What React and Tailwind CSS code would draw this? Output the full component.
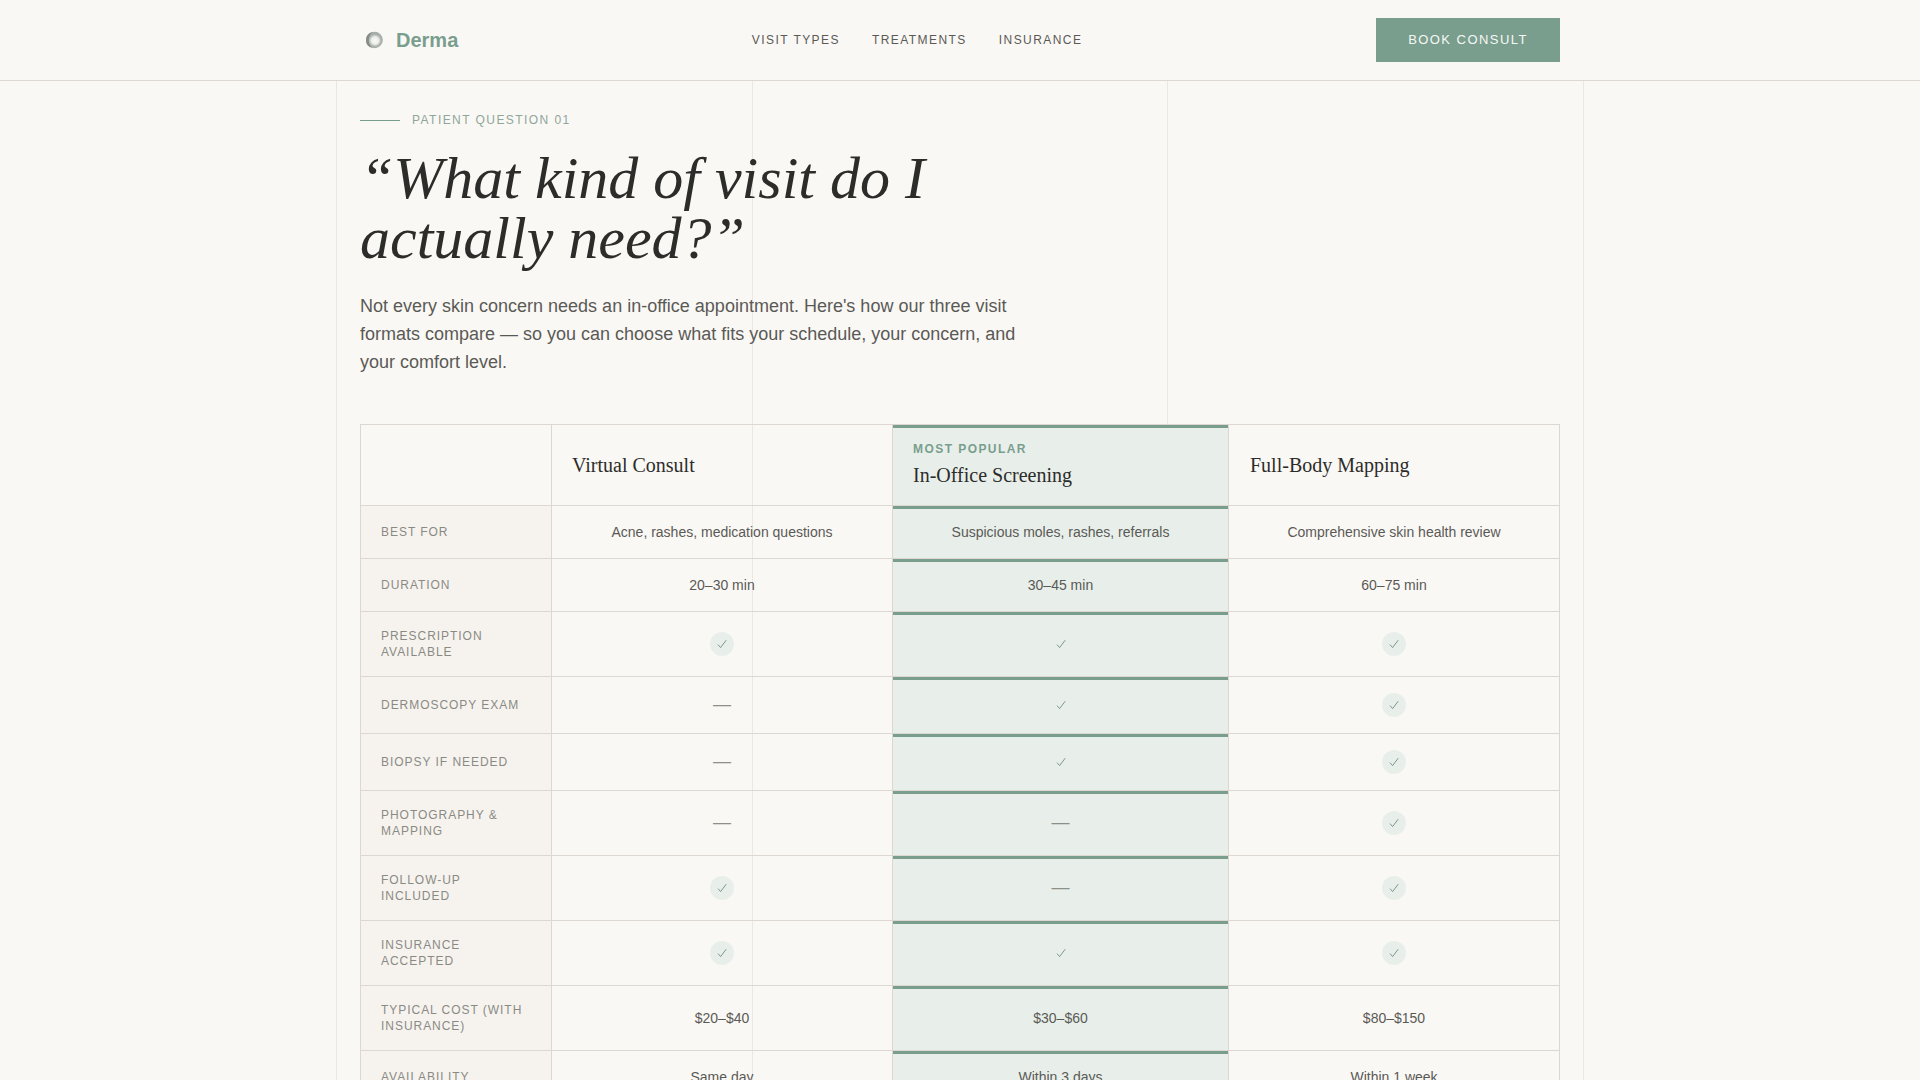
import React from "react";

const rows = [
  { label: "Best for", h: "h-[53px]", v: ["Acne, rashes, medication questions", "Suspicious moles, rashes, referrals", "Comprehensive skin health review"] },
  { label: "Duration", h: "h-[53px]", v: ["20–30 min", "30–45 min", "60–75 min"] },
  { label: "Prescription available", h: "h-[65px]", v: [1, 1, 1] },
  { label: "Dermoscopy exam", h: "h-[57px]", v: [0, 1, 1] },
  { label: "Biopsy if needed", h: "h-[57px]", v: [0, 1, 1] },
  { label: "Photography & mapping", h: "h-[65px]", v: [0, 0, 1] },
  { label: "Follow-up included", h: "h-[65px]", v: [1, 0, 1] },
  { label: "Insurance accepted", h: "h-[65px]", v: [1, 1, 1] },
  { label: "Typical cost (with insurance)", h: "h-[65px]", v: ["$20–$40", "$30–$60", "$80–$150"] },
  { label: "Availability", h: "h-[53px]", v: ["Same day", "Within 3 days", "Within 1 week"] },
];

function Check() {
  return (
    <span className="inline-flex h-6 w-6 items-center justify-center rounded-full bg-[#e8efea] align-middle">
      <svg width="12" height="12" viewBox="0 0 12 12" fill="none" stroke="#6f8f80" strokeWidth="0.9">
        <path d="M2 6.6 L4.6 9.6 L10.2 2.2" />
      </svg>
    </span>
  );
}

function Value({ v }) {
  if (v === 1) return <Check />;
  if (v === 0) return <span className="block pb-[2px] text-[18px] leading-6 text-[#8f8f89]">—</span>;
  return <span className="text-[14px] leading-5 text-[#5a5a55]">{v}</span>;
}

export default function App() {
  const sans = "font-['Liberation_Sans',Arial,sans-serif]";
  const serif = "font-['Liberation_Serif','Times_New_Roman',serif]";
  return (
    <div className={`relative h-screen w-full overflow-hidden bg-[#faf8f5] ${sans}`}>
      <div className="pointer-events-none absolute inset-0 flex justify-center">
        <div className="grid h-full w-[1248px] grid-cols-[416px_415px_417px]">
          <div className="border-l border-[#ebe7e0]" />
          <div className="border-l border-[#ece8e1]" />
          <div className="border-x border-[#ece8e1]" />
        </div>
      </div>

      <header className="relative h-[81px] border-b border-[#dcd8d1] bg-[#faf8f5]">
        <div className="mx-auto flex h-20 w-[1200px] items-center justify-between">
          <a className="flex items-center gap-2">
            <svg width="28" height="28" viewBox="0 0 28 28">
              <defs>
                <radialGradient id="lg">
                  <stop offset="0" stopColor="#f8f8f5" />
                  <stop offset="0.55" stopColor="#eef0ec" />
                  <stop offset="1" stopColor="#e6e9e4" stopOpacity="0" />
                </radialGradient>
              </defs>
              <circle cx="14.5" cy="14" r="8.3" fill="#a7aea9" />
              <path d="M12.5 5.9 A8.3 8.3 0 0 0 12 22 A11 11 0 0 1 12.5 5.9Z" fill="#848d88" />
              <circle cx="15" cy="14.5" r="6.4" fill="url(#lg)" />
            </svg>
            <span className="text-[20px] leading-7 font-semibold text-[#7a9e8e]">Derma</span>
          </a>
          <nav className="flex items-center gap-8 text-[12px] leading-4 tracking-[1.44px] text-[#5a5a55]">
            <a>VISIT TYPES</a>
            <a>TREATMENTS</a>
            <a>INSURANCE</a>
          </nav>
          <button className="h-11 w-[184px] bg-[#7a9e8e] text-[13px] tracking-[1.45px] text-[#f5f8f5]">BOOK CONSULT</button>
        </div>
      </header>

      <main className="relative mx-auto w-[1200px] pt-[31px]">
        <div className="flex h-4 items-center gap-3">
          <span className="h-px w-10 bg-[#7a9e8e]" />
          <span className="text-[12px] leading-4 tracking-[0.12em] text-[#8fa69a]">PATIENT QUESTION 01</span>
        </div>
        <h1 className={`mt-[20px] max-w-[720px] text-[60px] leading-[60px] font-normal text-[#2c2c2a] italic ${serif}`}>
          “What kind of visit do I actually need?”
        </h1>
        <p className="mt-[24px] max-w-[672px] text-[18px] leading-[28px] text-[#5a5a55]">
          Not every skin concern needs an in-office appointment. Here's how our three visit formats compare — so you can choose what fits your schedule, your concern, and your comfort level.
        </p>

        <table className="mt-[48px] w-[1200px] table-fixed border-separate border-spacing-0 border-t border-l border-[#dcd8d1]">
          <colgroup>
            <col className="w-[191px]" />
            <col className="w-[341px]" />
            <col className="w-[336px]" />
            <col className="w-[331px]" />
          </colgroup>
          <thead>
            <tr className="h-[81px]">
              <th className="border-r border-b border-[#dcd8d1]" />
              <th className={`border-r border-b border-[#dcd8d1] px-5 text-left text-[20px] leading-7 font-normal text-[#2c2c2a] ${serif}`}>Virtual Consult</th>
              <th className="border-r border-b border-[#dcd8d1] bg-[#e8efea] px-5 pb-[1px] text-left font-normal shadow-[inset_0_3px_0_#7a9e8e]">
                <div className="text-[12px] leading-4 font-bold tracking-[0.12em] text-[#7a9e8e]">MOST POPULAR</div>
                <div className={`mt-[4px] text-[20px] leading-7 text-[#2c2c2a] ${serif}`}>In-Office Screening</div>
              </th>
              <th className={`border-r border-b border-[#dcd8d1] pr-5 pl-[21px] text-left text-[20px] leading-7 font-normal text-[#2c2c2a] ${serif}`}>Full-Body Mapping</th>
            </tr>
          </thead>
          <tbody>
            {rows.map((r) => (
              <tr key={r.label} className={r.h}>
                <td className="border-r border-b border-[#dcd8d1] bg-[#f6f3ee] px-5 text-[12px] leading-4 tracking-[0.08em] text-[#8a8a85] uppercase">{r.label}</td>
                <td className="border-r border-b border-[#dcd8d1] px-5 text-center"><Value v={r.v[0]} /></td>
                <td className="border-r border-b border-[#dcd8d1] bg-[#e8efea] px-5 text-center shadow-[inset_0_3px_0_#7a9e8e]"><Value v={r.v[1]} /></td>
                <td className="border-r border-b border-[#dcd8d1] px-5 text-center"><Value v={r.v[2]} /></td>
              </tr>
            ))}
          </tbody>
        </table>
      </main>
    </div>
  );
}
